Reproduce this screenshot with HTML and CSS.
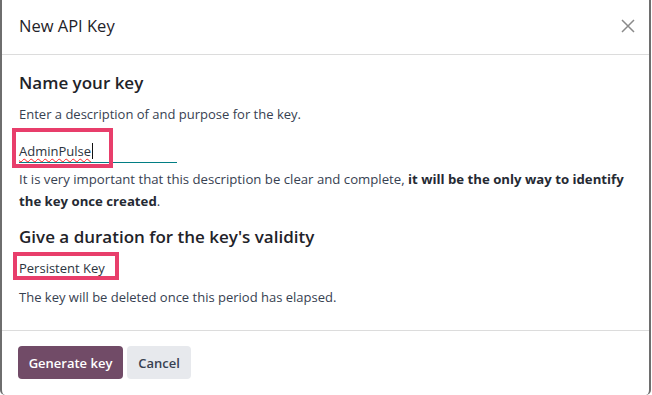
FILE: index.html
```html
<!DOCTYPE html>
<html lang="en">
<head>
<meta charset="utf-8">
<title>New API Key</title>
<link rel="stylesheet" href="styles.css">
</head>
<body>
<div class="modal">
  <header class="modal-header">
    <h1 class="modal-title">New API Key</h1>
    <button class="close" aria-label="Close">
      <svg width="14" height="14" viewBox="0 0 14 14"><path d="M1 1 L13 13 M13 1 L1 13" stroke="#8a8a8a" stroke-width="1.5" fill="none"/></svg>
    </button>
  </header>
  <main class="modal-body">
    <h2 class="section-title">Name your key</h2>
    <p class="text">Enter a description of and purpose for the key.</p>
    <div class="field">
      <div class="input"><span class="typed">AdminPulse</span><span class="caret"></span></div>
      <div class="mark mark-name"></div>
    </div>
    <p class="text note">It is very important that this description be clear and complete, <strong>it will be the only way to identify</strong> <strong>the key once created</strong>.</p>
    <h2 class="section-title second">Give a duration for the key's validity</h2>
    <div class="field field-duration">
      <div class="value">Persistent Key</div>
      <div class="mark mark-duration"></div>
    </div>
    <p class="text after">The key will be deleted once this period has elapsed.</p>
  </main>
  <footer class="modal-footer">
    <button class="btn btn-primary">Generate key</button>
    <button class="btn btn-secondary">Cancel</button>
  </footer>
</div>
</body>
</html>
```

FILE: styles.css
```css
* { box-sizing: border-box; }
html, body { margin: 0; padding: 0; background: #ffffff; }
body {
  font-family: "Open Sans", "Noto Sans", sans-serif;
  color: #374151;
  width: 652px;
  height: 395px;
  overflow: hidden;
}
.modal {
  width: 651px;
  height: 395px;
  border-left: 2px solid #6e6e6e;
  border-right: 2px solid #6e6e6e;
  border-bottom-left-radius: 5px;
  border-bottom-right-radius: 5px;
  display: flex;
  flex-direction: column;
  background: #fff;
}
.modal-header {
  display: flex;
  justify-content: space-between;
  align-items: center;
  padding: 14px 14px 16px 17px;
  border-bottom: 1px solid #dcdcdc;
}
.modal-title {
  margin: 0;
  font-size: 16.5px;
  line-height: 24px;
  font-weight: 500;
  color: #1f2329;
}
.close {
  border: 0;
  background: none;
  padding: 0;
  width: 14px;
  height: 14px;
  display: block;
  cursor: pointer;
}
.close svg { display: block; }
.modal-body {
  padding: 16px 17px 23px 17px;
}
.section-title {
  margin: 0;
  font-size: 17px;
  line-height: 24px;
  font-weight: 600;
  color: #1f2329;
}
.section-title.second { margin-top: 13px; }
.text {
  margin: 9px 0 0 0;
  font-size: 13px;
  line-height: 20px;
}
.text strong { font-weight: 700; color: #252a33; }
.note {
  margin-top: 5px;
  line-height: 22px;
  font-size: 13.2px;
}
.field {
  position: relative;
  margin-top: 17px;
}
.input {
  width: 158px;
  font-size: 13px;
  line-height: 21px;
  color: #2b3440;
  border-bottom: 1px solid #017e84;
}
.typed {
  text-decoration-line: underline;
  text-decoration-style: wavy;
  text-decoration-color: #ff1f1f;
  text-decoration-thickness: 1.2px;
  text-underline-offset: 2px;
  text-decoration-skip-ink: none;
}
.caret {
  display: inline-block;
  width: 1px;
  height: 16px;
  background: #111;
  vertical-align: -3px;
  margin-left: 1px;
}
.mark {
  position: absolute;
  border: 4px solid #e83e6b;
  pointer-events: none;
}
.mark-name {
  left: -7px;
  top: -13px;
  width: 101px;
  height: 40px;
}
.field-duration { margin-top: 9px; }
.value {
  font-size: 13px;
  line-height: 20px;
  color: #2b3440;
}
.mark-duration {
  left: -6px;
  top: -6px;
  width: 106px;
  height: 28px;
}
.after { margin-top: 9px; }
.modal-footer {
  border-top: 1px solid #dcdcdc;
  padding: 15px 16px;
  display: flex;
  gap: 4px;
}
.btn {
  height: 33px;
  border: 0;
  border-radius: 4px;
  font-family: "Open Sans", "Noto Sans", sans-serif;
  font-size: 13px;
  font-weight: 600;
  padding: 0 10px;
}
.btn-primary {
  background: #714b67;
  color: #ffffff;
  width: 105px;
}
.btn-secondary {
  background: #e7e9ed;
  color: #374151;
  width: 64px;
}
```
